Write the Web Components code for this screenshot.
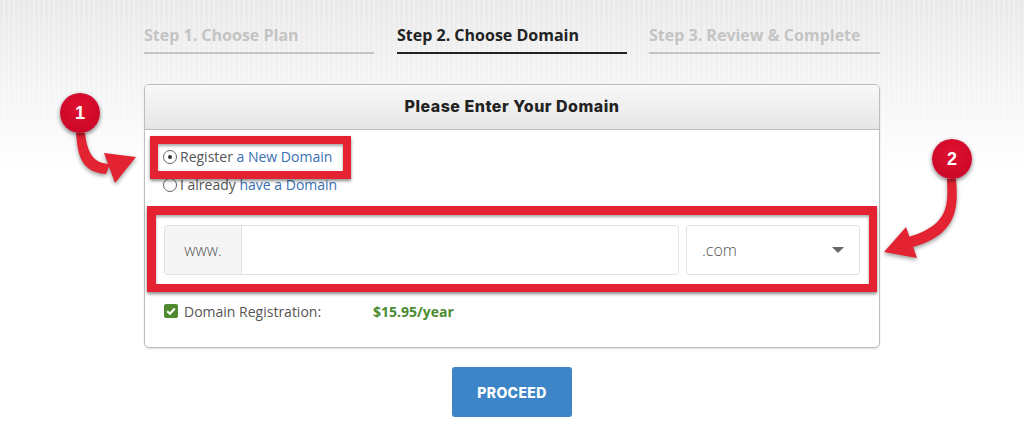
<!DOCTYPE html>
<html><head><meta charset="utf-8"><title>Choose Domain</title>
<style>
html,body{margin:0;padding:0;background:#fff;}
body{font-family:"Open Sans",sans-serif;color:#555;}
</style></head>
<body>
<order-page>
  <step-bar slot="steps">
    <step-item>Step 1. Choose Plan</step-item>
    <step-item active>Step 2. Choose Domain</step-item>
    <step-item>Step 3. Review &amp; Complete</step-item>
  </step-bar>
  <domain-panel heading="Please Enter Your Domain">
    <radio-row checked>Register <a>a New Domain</a></radio-row>
    <radio-row>I already <a>have a Domain</a></radio-row>
    <domain-input></domain-input>
    <price-row label="Domain Registration:" price="$15.95/year"></price-row>
  </domain-panel>
  <proceed-button>PROCEED</proceed-button>
</order-page>
<mark-box style="left:150px;top:136px;width:185px;height:27px"></mark-box>
<mark-box style="left:147px;top:206px;width:713px;height:69px;border-width:9px 8px 8px 9px"></mark-box>
<call-arrows></call-arrows>
<num-badge style="left:60px;top:93px">1</num-badge>
<num-badge style="left:932px;top:139px">2</num-badge>
<script>
function def(name, css, html, setup){
  customElements.define(name, class extends HTMLElement{
    constructor(){super();const r=this.attachShadow({mode:'open'});
      r.innerHTML='<style>'+css+'</style>'+html;}
    connectedCallback(){ if(setup) setup(this,this.shadowRoot); }
  });
}
def('order-page',`:host{display:flex;flex-direction:column;align-items:center;height:444px;box-sizing:border-box;
  background:linear-gradient(rgba(255,255,255,0),#fff 170px) 0 0/100% 100% no-repeat,repeating-linear-gradient(90deg,#e9e9e9 0 3px,#efefef 3px 5px);}`,
  `<slot name="steps"></slot><slot></slot>`);
def('step-bar',`:host{display:flex;width:736px;gap:23px;padding-top:24px;box-sizing:border-box;}
  ::slotted(:last-child){margin-left:-1px;flex-basis:231px;}`,`<slot></slot>`);
def('step-item',`:host{flex:0 0 230px;display:block;font:700 16px/22px "Open Sans",sans-serif;color:#c4c4c4;height:28px;border-bottom:2px solid #c4c4c4;white-space:nowrap;box-sizing:content-box;}
  :host([active]){color:#222;border-bottom-color:#222;}`,`<slot></slot>`);
def('domain-panel',`:host{display:block;width:736px;height:264px;box-sizing:border-box;margin-top:30px;background:#fff;border:1px solid #bdbdbd;border-radius:5px;box-shadow:0 1px 2px rgba(0,0,0,.12);overflow:hidden;}
  header{height:44px;border-bottom:1px solid #bdbdbd;background:linear-gradient(#f8f8f8,#e6e6e6);text-align:center;font:800 16px/42px Inter,sans-serif;letter-spacing:.5px;color:#222;}
  .b{padding:13px 18px 0 18px;display:flex;flex-direction:column;}`,
  `<header></header><div class="b"><slot></slot></div>`,
  (h,r)=>{r.querySelector('header').textContent=h.getAttribute('heading');});
def('radio-row',`:host{display:flex;align-items:center;height:28px;font:14px/28px "Open Sans",sans-serif;color:#555;white-space:pre;}
  i{width:12px;height:12px;border:1px solid #666;border-radius:50%;background:#fff;margin-right:3px;display:flex;align-items:center;justify-content:center;flex:none;}
  :host([checked]) i::after{content:"";width:4px;height:4px;border-radius:50%;background:#333;}
  ::slotted(a){color:#3a70b2;}`,`<i></i><slot></slot>`);
def('domain-input',`:host{display:flex;gap:7px;margin:26px 0 0 1px;height:50px;font:300 16px "Open Sans",sans-serif;color:#555;}
  .g{display:flex;width:515px;border:1px solid #e2e2e2;border-radius:3px;box-sizing:border-box;overflow:hidden;}
  .w{width:76px;background:#f5f5f5;border-right:1px solid #e2e2e2;display:flex;align-items:center;justify-content:center;font-size:15.5px;color:#555;}
  .g div:last-child{flex:1;}
  .s{width:174px;border:1px solid #e2e2e2;border-radius:3px;box-sizing:border-box;display:flex;align-items:center;justify-content:space-between;padding:0 15px;}
  .s b{width:0;height:0;border:6px solid transparent;border-top:6px solid #666;border-bottom:0;}`,
  `<div class="g"><div class="w">www.</div><div></div></div><div class="s"><span>.com</span><b></b></div>`);
def('price-row',`:host{display:flex;align-items:center;margin:26px 0 0 1px;height:22px;font:14px/22px "Open Sans",sans-serif;color:#555;}
  svg{flex:none;margin-right:6px;margin-top:-3px}.l{width:189px}.p{font-weight:700;color:#4b8b2f;}`,
  `<svg width="14" height="14" viewBox="0 0 14 14"><rect width="14" height="14" rx="2" fill="#4f8b2e"/><path d="M3.2 7.2 6 9.8 10.8 4.6" fill="none" stroke="#fff" stroke-width="2.2"/></svg><span class="l"></span><span class="p"></span>`,
  (h,r)=>{r.querySelector('.l').textContent=h.getAttribute('label');r.querySelector('.p').textContent=h.getAttribute('price');});
def('proceed-button',`:host{display:flex;align-items:center;justify-content:center;width:120px;height:50px;margin-top:19px;background:#3d85c6;border-radius:3px;color:#fff;font:800 14px Inter,sans-serif;letter-spacing:.4px;}`,`<slot></slot>`);
def('mark-box',`:host{position:absolute;display:block;border:8px solid #e32232;box-shadow:0 2px 3px rgba(0,0,0,.45),inset 0 2px 3px rgba(0,0,0,.35);}`,``);
def('num-badge',`:host{position:absolute;display:flex;width:40px;height:40px;border-radius:50%;align-items:center;justify-content:center;background:radial-gradient(circle at 50% 35%,#e0102f,#c40527);box-shadow:0 2px 4px rgba(0,0,0,.5);color:#fff;font:700 18px "Liberation Sans",sans-serif;}`,`<slot></slot>`);
def('call-arrows',`:host{position:absolute;left:0;top:0;display:block;width:1024px;height:444px;pointer-events:none;}
  svg{display:block;filter:drop-shadow(0 2px 2px rgba(0,0,0,.4));}`,
  `<svg width="1024" height="444" viewBox="0 0 1024 444">
   <path d="M76 133 C78 150 78 172 106 174 L110 164 C92 164 87 150 85 133Z" fill="#e32232"/>
   <path d="M136 157 104 153 115 183Z" fill="#e32232"/>
   <path d="M947 179 C948 205 950 226 905 238 L908 248 C960 236 958 205 956 179Z" fill="#e32232"/>
   <path d="M884 252 906 227 917 258Z" fill="#e32232"/>
  </svg>`);
</script>
</body></html>
